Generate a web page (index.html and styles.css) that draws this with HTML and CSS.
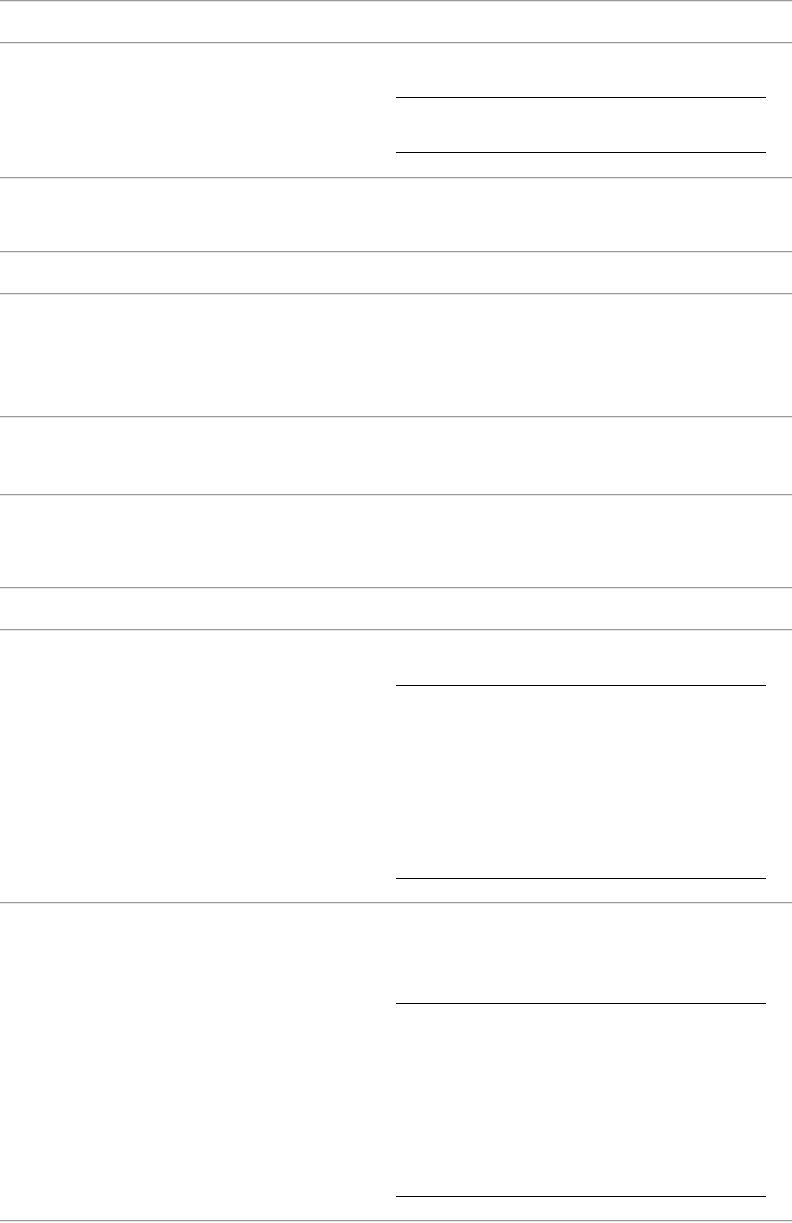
FILE: index.html
```html
<!DOCTYPE html>
<html lang="en">
<head>
    <meta charset="UTF-8">
    <meta name="viewport" content="width=device-width, initial-scale=1.0">
    <title>Form</title>
    <link rel="stylesheet" href="styles.css">
</head>
<body>
    <hr class="rule">
    <div class="row r1"></div>
    <hr class="rule">
    <div class="row r2">
        <div class="label"></div>
        <div class="field short"></div>
    </div>
    <hr class="rule">
    <div class="row r3"></div>
    <hr class="rule">
    <div class="row r4"></div>
    <hr class="rule">
    <div class="row r5"></div>
    <hr class="rule">
    <div class="row r6"></div>
    <hr class="rule">
    <div class="row r7"></div>
    <hr class="rule">
    <div class="row r8"></div>
    <hr class="rule">
    <div class="row r9">
        <div class="label"></div>
        <div class="field tall"></div>
    </div>
    <hr class="rule">
    <div class="row r10">
        <div class="label"></div>
        <div class="field tall"></div>
    </div>
    <hr class="rule">
</body>
</html>
```

FILE: styles.css
```css
body {
    margin: 0;
    font-family: "Liberation Sans", Arial, sans-serif;
    background: #fff;
}
.rule {
    margin: 0;
    height: 0;
    border: none;
    border-top: 1px solid #9a9a9a;
    border-bottom: 1px solid #e6e6e6;
}
.row {
    display: flex;
    align-items: flex-start;
    box-sizing: border-box;
}
.label {
    width: 396px;
    flex-shrink: 0;
}
.r1 { height: 40px; }
.r2 { height: 133px; padding-top: 53px; }
.r3 { height: 72px; }
.r4 { height: 40px; }
.r5 { height: 121px; }
.r6 { height: 76px; }
.r7 { height: 91px; }
.r8 { height: 40px; }
.r9 { height: 271px; padding-top: 54px; }
.r10 { height: 316px; padding-top: 99px; }
.field {
    width: 370px;
    border-top: 1px solid #000;
    border-bottom: 1px solid #000;
    box-sizing: border-box;
}
.short { height: 56px; }
.tall { height: 194px; }
```
